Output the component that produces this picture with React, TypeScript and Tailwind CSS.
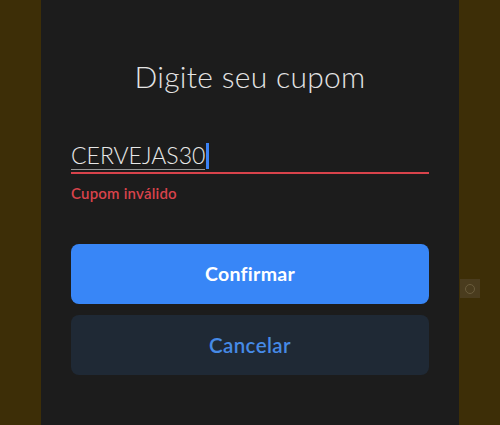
import React from 'react';

const App = () => {
  return (
    <div
      className="relative w-[500px] h-[425px] overflow-hidden bg-[#3d2e07] flex justify-center"
      style={{ fontFamily: 'Lato, "Open Sans", sans-serif' }}
    >
      {/* faint element behind the sheet */}
      <div className="absolute left-[460px] top-[279px] w-[20px] h-[19px] bg-[#4a3c1e] flex items-center justify-center">
        <div className="w-[10px] h-[10px] rounded-full border border-[#6a5c3c]" />
      </div>

      <div className="relative w-[418px] h-full bg-[#1c1c1c] px-[30px] flex flex-col">
        <h1 className="mt-[58px] text-center text-[30px] font-light leading-[36px] text-[#e4e4e4] tracking-[0.3px]">
          Digite seu cupom
        </h1>

        <div className="mt-[46px] relative">
          <div className="flex items-end h-[30px]">
            <span className="text-[23px] font-light leading-[28px] text-[#e8e8e8] border-b border-[#9a9a9a]">
              CERVEJAS30
            </span>
            <span className="ml-[1px] mb-[1px] w-[3px] h-[26px] bg-[#3b82f6]" />
          </div>
          <div className="mt-[2px] h-[2px] bg-[#d8434b]" />
        </div>

        <p className="mt-[10px] text-[15px] font-semibold leading-[18px] text-[#d8434b] tracking-[0.2px]">
          Cupom inválido
        </p>

        <button className="mt-[42px] h-[60px] w-full rounded-[8px] bg-[#3886f7] text-white text-[19.5px] font-bold tracking-[0.3px]">
          Confirmar
        </button>
        <button className="mt-[11px] h-[60px] w-full rounded-[8px] bg-[#1f2935] text-[#468ae6] text-[20.5px] font-semibold tracking-[0.4px]">
          Cancelar
        </button>
      </div>
    </div>
  );
};

export default App;
